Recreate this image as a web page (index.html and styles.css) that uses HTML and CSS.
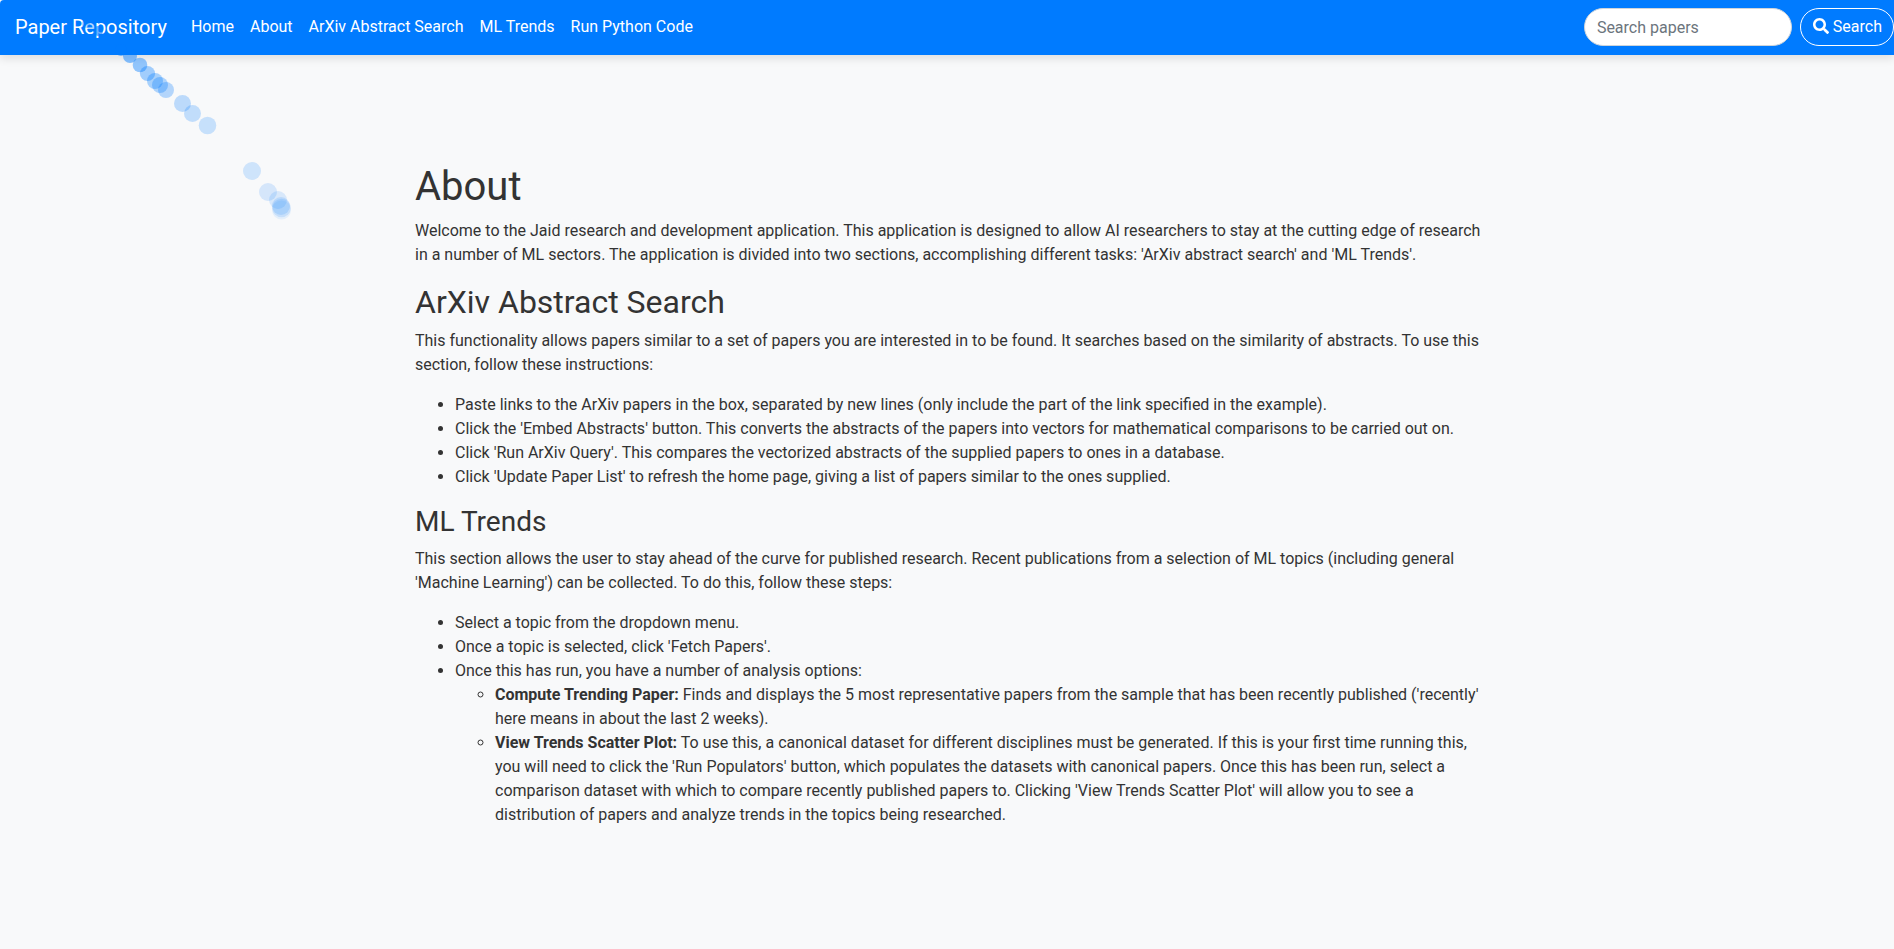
FILE: index.html
```html
<!DOCTYPE html>
<html lang="en">
<head>
<meta charset="utf-8">
<title>About - Paper Repository</title>
<link rel="stylesheet" href="styles.css">
</head>
<body>
<nav class="navbar">
  <a class="brand" href="#">Paper Repository</a>
  <ul class="nav-links">
    <li><a href="#">Home</a></li>
    <li><a href="#">About</a></li>
    <li><a href="#">ArXiv Abstract Search</a></li>
    <li><a href="#">ML Trends</a></li>
    <li><a href="#">Run Python Code</a></li>
  </ul>
  <form class="search">
    <input type="search" placeholder="Search papers" aria-label="Search papers">
    <button type="button"><svg viewBox="0 0 512 512" aria-hidden="true"><path d="M505 442.7L405.3 343c-4.5-4.5-10.6-7-17-7H372c27.6-35.3 44-79.7 44-128C416 93.100 322.900 0 208 0S0 93.100 0 208s93.100 208 208 208c48.300 0 92.700-16.400 128-44v16.300c0 6.400 2.500 12.500 7 17l99.700 99.700c9.400 9.400 24.600 9.400 33.900 0l28.300-28.300c9.400-9.400 9.400-24.600.1-34zM208 336c-70.700 0-128-57.200-128-128 0-70.700 57.200-128 128-128 70.700 0 128 57.200 128 128 0 70.700-57.200 128-128 128z"/></svg> Search</button>
  </form>
</nav>
<svg class="trail" width="400" height="260" aria-hidden="true">
  <g fill="#007bff">
    <circle cx="86" cy="24" r="4" opacity=".3"/>
    <circle cx="91" cy="26" r="4" opacity=".3"/>
    <circle cx="98" cy="31" r="5" opacity=".6"/>
    <circle cx="121" cy="50" r="6" opacity=".5"/>
    <circle cx="130" cy="56" r="7" opacity=".47"/>
    <circle cx="140" cy="65" r="7.300" opacity=".41"/>
    <circle cx="147.500" cy="73.500" r="7.600" opacity=".35"/>
    <circle cx="155" cy="81" r="8" opacity=".32"/>
    <circle cx="160" cy="85" r="8" opacity=".3"/>
    <circle cx="166" cy="90" r="8" opacity=".28"/>
    <circle cx="182.500" cy="103.500" r="8.500" opacity=".24"/>
    <circle cx="192.500" cy="113.500" r="8.500" opacity=".22"/>
    <circle cx="207.500" cy="125.500" r="8.800" opacity=".2"/>
    <circle cx="252" cy="171" r="9" opacity=".17"/>
    <circle cx="268" cy="192" r="9" opacity=".14"/>
    <circle cx="278" cy="200" r="9" opacity=".13"/>
    <circle cx="281" cy="206" r="9" opacity=".14"/>
    <circle cx="281.500" cy="208" r="9.300" opacity=".13"/>
    <circle cx="281.500" cy="210" r="9.500" opacity=".08"/>
  </g>
</svg>
<main class="content">
  <h1>About</h1>
  <p>Welcome to the Jaid research and development application. This application is designed to allow AI researchers to stay at the cutting edge of research in a number of ML sectors. The application is divided into two sections, accomplishing different tasks: 'ArXiv abstract search' and 'ML Trends'.</p>
  <h2>ArXiv Abstract Search</h2>
  <p>This functionality allows papers similar to a set of papers you are interested in to be found. It searches based on the similarity of abstracts. To use this section, follow these instructions:</p>
  <ul>
    <li>Paste links to the ArXiv papers in the box, separated by new lines (only include the part of the link specified in the example).</li>
    <li>Click the 'Embed Abstracts' button. This converts the abstracts of the papers into vectors for mathematical comparisons to be carried out on.</li>
    <li>Click 'Run ArXiv Query'. This compares the vectorized abstracts of the supplied papers to ones in a database.</li>
    <li>Click 'Update Paper List' to refresh the home page, giving a list of papers similar to the ones supplied.</li>
  </ul>
  <h3>ML Trends</h3>
  <p>This section allows the user to stay ahead of the curve for published research. Recent publications from a selection of ML topics (including general 'Machine Learning') can be collected. To do this, follow these steps:</p>
  <ul>
    <li>Select a topic from the dropdown menu.</li>
    <li>Once a topic is selected, click 'Fetch Papers'.</li>
    <li>Once this has run, you have a number of analysis options:
      <ul>
        <li><strong>Compute Trending Paper:</strong> Finds and displays the 5 most representative papers from the sample that has been recently published ('recently' here means in about the last 2 weeks).</li>
        <li><strong>View Trends Scatter Plot:</strong> To use this, a canonical dataset for different disciplines must be generated. If this is your first time running this, you will need to click the 'Run Populators' button, which populates the datasets with canonical papers. Once this has been run, select a comparison dataset with which to compare recently published papers to. Clicking 'View Trends Scatter Plot' will allow you to see a distribution of papers and analyze trends in the topics being researched.</li>
      </ul>
    </li>
  </ul>
</main>
</body>
</html>
```
FILE: styles.css
```css
* { box-sizing: border-box; }
body {
  margin: 0;
  background: #f8f9fa;
  color: #333;
  font: 16px/24px Roboto, sans-serif;
}
.navbar {
  position: relative;
  display: flex;
  align-items: center;
  padding: 7px 0 8px 15px;
  border-top-left-radius: 4px;
  background: #007bff;
  box-shadow: 0 4px 8px rgba(0, 0, 0, .1);
}
.navbar a { color: #fff; text-decoration: none; }
.brand { margin-right: 16px; font-size: 20px; line-height: 30px; }
.nav-links { display: flex; margin: 0; padding: 0; list-style: none; }
.nav-links a { display: block; padding: 8px; }
.search { display: flex; gap: 8px; margin-left: auto; }
.search input {
  width: 208px;
  height: 38px;
  padding: 6px 12px;
  border: 1px solid #ced4da;
  border-radius: 20px;
  background: #fff;
  font: inherit;
}
.search input::placeholder { color: #6c757d; opacity: 1; }
.search button {
  height: 38px;
  padding: 6px 11px 6px 12px;
  border: 1px solid #fff;
  border-radius: 20px;
  background: transparent;
  color: #fff;
  font: inherit;
}
.search svg { width: 16px; height: 16px; fill: currentColor; vertical-align: -2px; }
.trail { position: absolute; top: 0; left: 0; pointer-events: none; }
.content { max-width: 1094px; margin: 0 auto; padding: 108px 0 48px 15px; }
h1, h2, h3 { margin: 0 0 8px; font-weight: 400; }
h1 { font-size: 40px; line-height: 48px; }
h2 { font-size: 32px; line-height: 38px; }
h3 { font-size: 28px; line-height: 34px; }
p, .content > ul { margin: 0 0 16px; }
.content ul { padding-left: 40px; }
.content ul ul { margin: 0; }
strong { font-weight: 700; }
```
